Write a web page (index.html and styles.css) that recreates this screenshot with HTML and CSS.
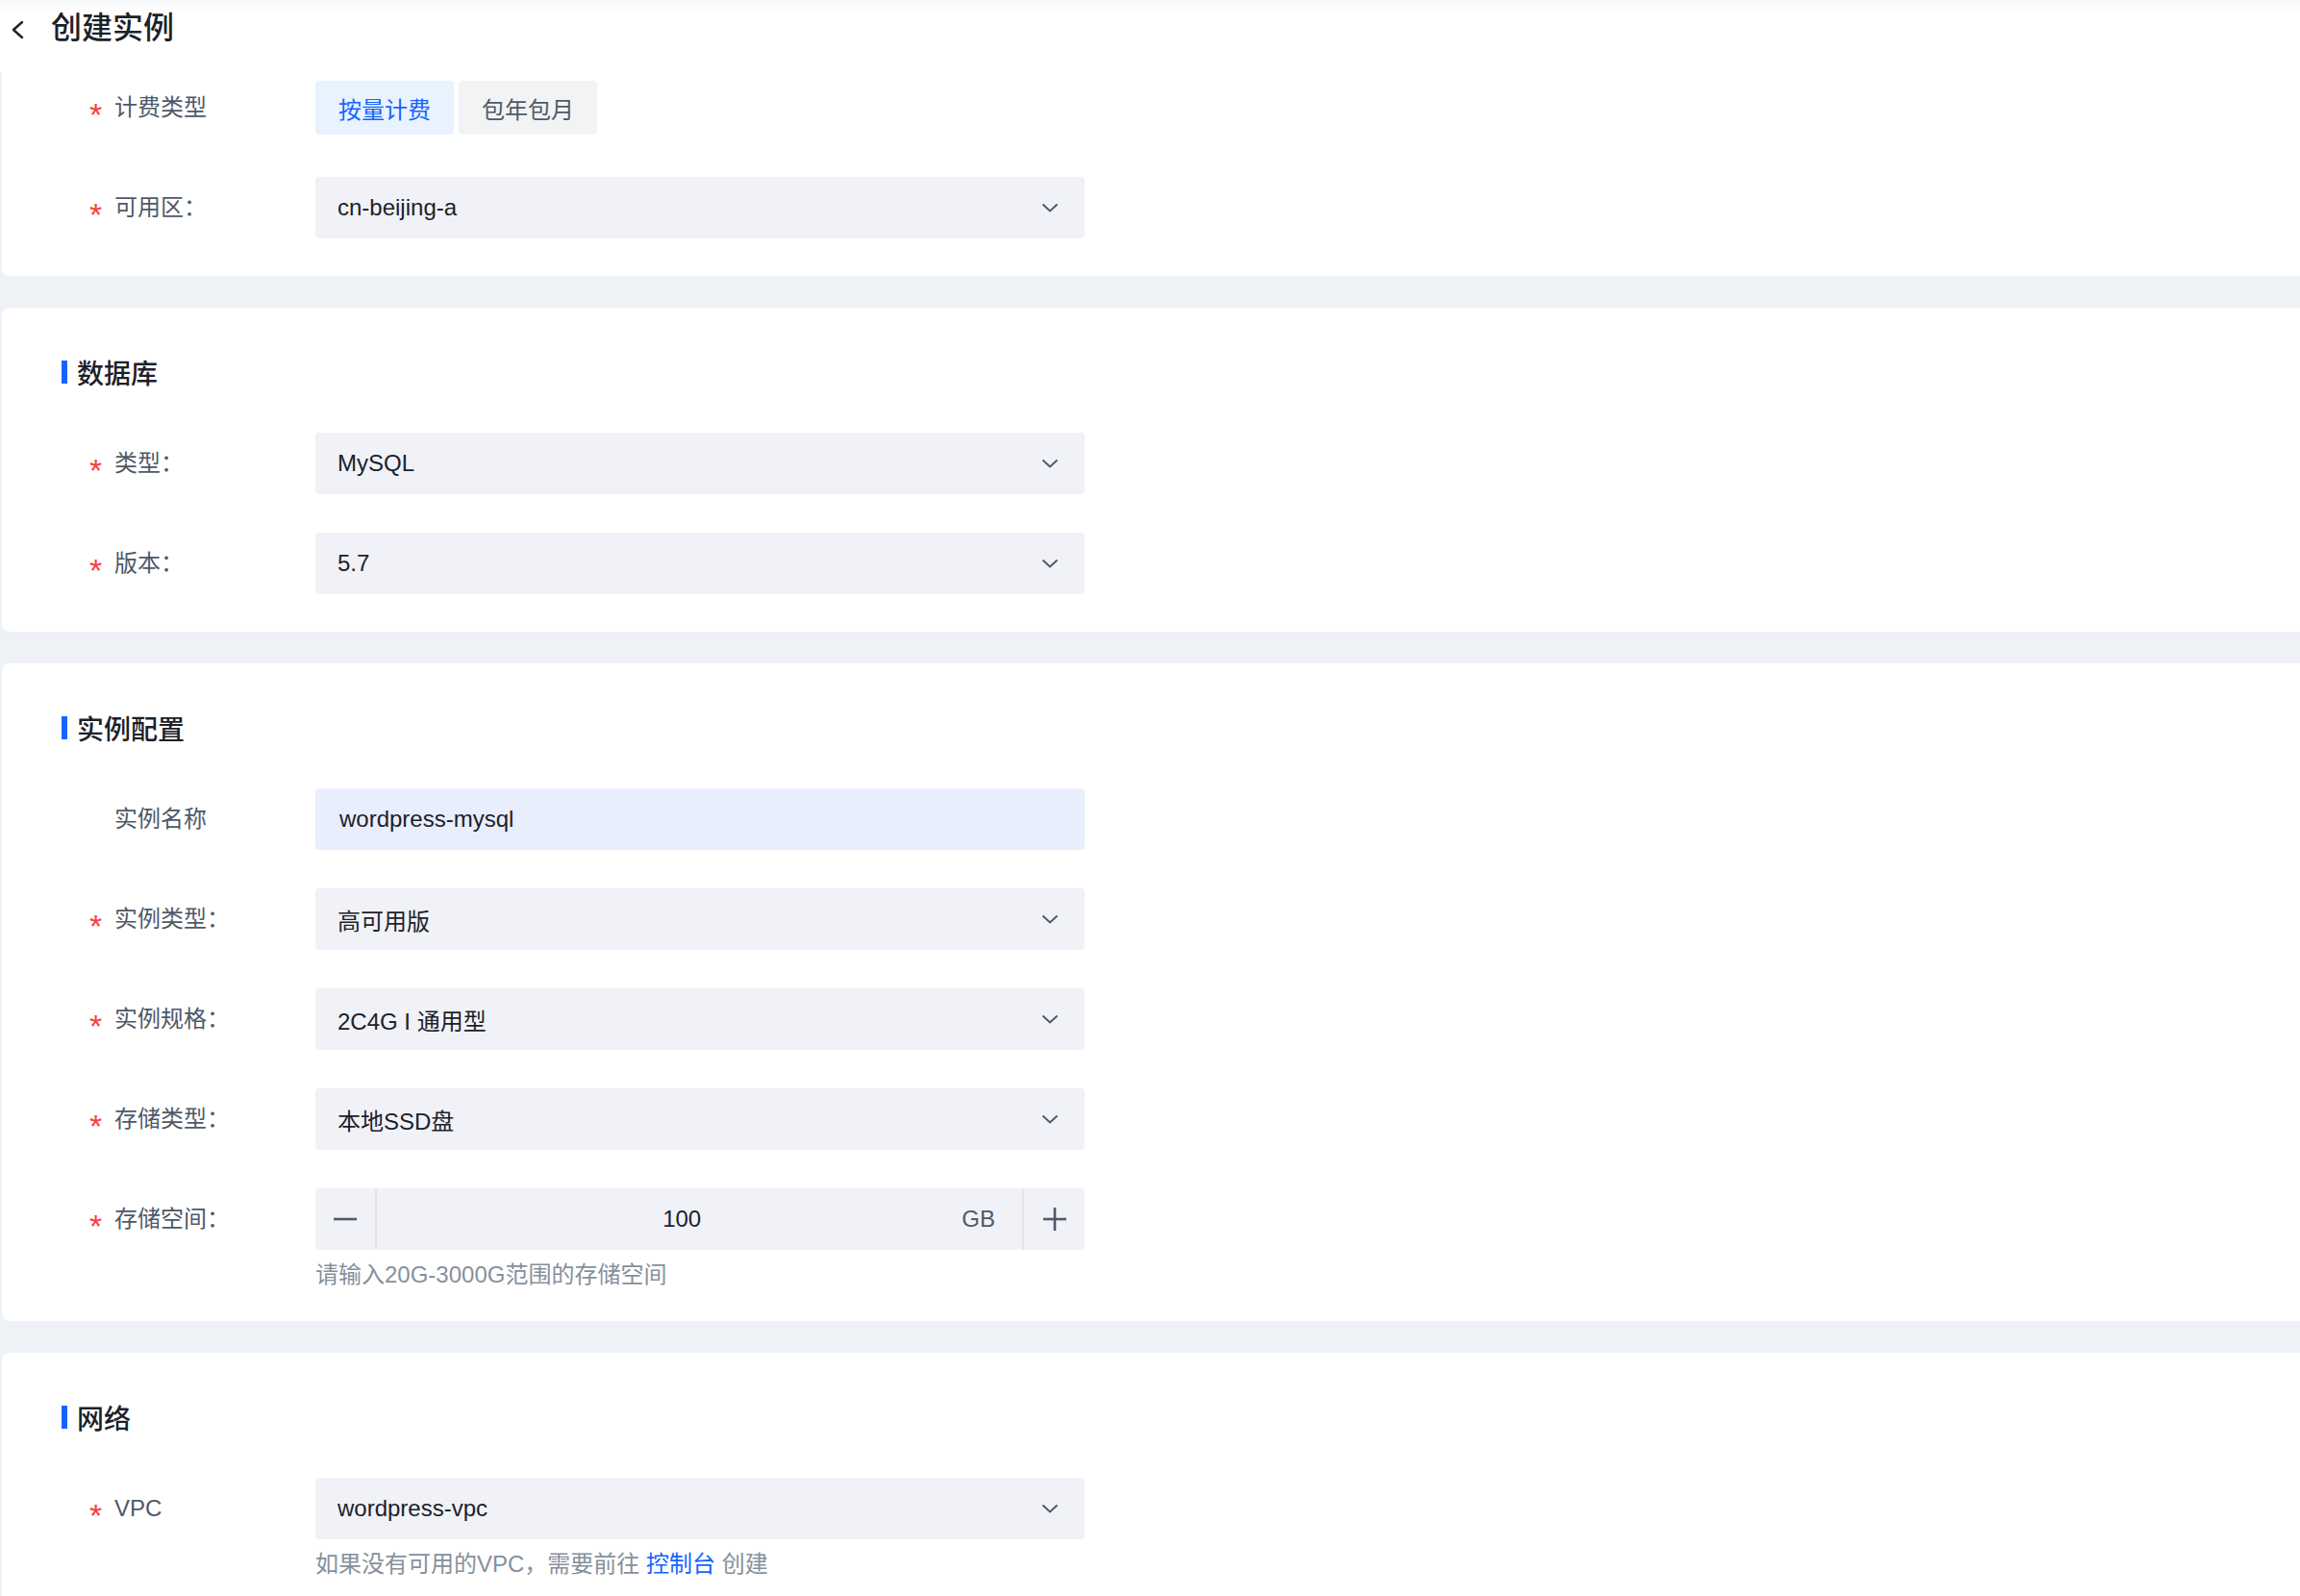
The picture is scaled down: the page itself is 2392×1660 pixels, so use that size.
FILE: index.html
```html
<!DOCTYPE html>
<html lang="zh-CN">
<head>
<meta charset="utf-8">
<title>创建实例</title>
<link rel="stylesheet" href="styles.css">
</head>
<body>
<header class="topbar">
  <div class="topbar-row">
    <svg class="back-icon" width="14" height="20" viewBox="0 0 14 20" aria-hidden="true"><polyline points="12,2 3,10 12,18" fill="none" stroke="#1d2129" stroke-width="2.4" stroke-linecap="round" stroke-linejoin="round"/></svg>
    <h1 class="page-title">创建实例</h1>
  </div>
</header>
<main class="content">
  <section class="card card-first">
    <div class="form-item">
      <div class="form-label"><span class="req">*</span>计费类型</div>
      <div class="segmented">
        <span class="seg seg-active">按量计费</span>
        <span class="seg">包年包月</span>
      </div>
    </div>
    <div class="form-item">
      <div class="form-label"><span class="req">*</span>可用区：</div>
      <div class="select"><span class="select-value">cn-beijing-a</span><svg class="arrow" width="18" height="10" viewBox="0 0 18 10"><polyline points="1.5,1.5 9,8.5 16.5,1.5" fill="none" stroke="#4e5969" stroke-width="2"/></svg></div>
    </div>
  </section>

  <section class="card">
    <h2 class="section-title">数据库</h2>
    <div class="form-item">
      <div class="form-label"><span class="req">*</span>类型：</div>
      <div class="select"><span class="select-value">MySQL</span><svg class="arrow" width="18" height="10" viewBox="0 0 18 10"><polyline points="1.5,1.5 9,8.5 16.5,1.5" fill="none" stroke="#4e5969" stroke-width="2"/></svg></div>
    </div>
    <div class="form-item">
      <div class="form-label"><span class="req">*</span>版本：</div>
      <div class="select"><span class="select-value">5.7</span><svg class="arrow" width="18" height="10" viewBox="0 0 18 10"><polyline points="1.5,1.5 9,8.5 16.5,1.5" fill="none" stroke="#4e5969" stroke-width="2"/></svg></div>
    </div>
  </section>

  <section class="card">
    <h2 class="section-title">实例配置</h2>
    <div class="form-item">
      <div class="form-label"><span class="req req-empty"></span>实例名称</div>
      <div class="input input-filled"><span class="select-value">wordpress-mysql</span></div>
    </div>
    <div class="form-item">
      <div class="form-label"><span class="req">*</span>实例类型：</div>
      <div class="select"><span class="select-value">高可用版</span><svg class="arrow" width="18" height="10" viewBox="0 0 18 10"><polyline points="1.5,1.5 9,8.5 16.5,1.5" fill="none" stroke="#4e5969" stroke-width="2"/></svg></div>
    </div>
    <div class="form-item">
      <div class="form-label"><span class="req">*</span>实例规格：</div>
      <div class="select"><span class="select-value">2C4G I 通用型</span><svg class="arrow" width="18" height="10" viewBox="0 0 18 10"><polyline points="1.5,1.5 9,8.5 16.5,1.5" fill="none" stroke="#4e5969" stroke-width="2"/></svg></div>
    </div>
    <div class="form-item">
      <div class="form-label"><span class="req">*</span>存储类型：</div>
      <div class="select"><span class="select-value">本地SSD盘</span><svg class="arrow" width="18" height="10" viewBox="0 0 18 10"><polyline points="1.5,1.5 9,8.5 16.5,1.5" fill="none" stroke="#4e5969" stroke-width="2"/></svg></div>
    </div>
    <div class="form-item form-item-help">
      <div class="form-label"><span class="req">*</span>存储空间：</div>
      <div class="stepper">
        <span class="step-btn step-minus"><svg width="24" height="4" viewBox="0 0 24 4"><line x1="0" y1="2" x2="24" y2="2" stroke="#4e5969" stroke-width="2.6"/></svg></span>
        <span class="step-value">100</span>
        <span class="step-suffix">GB</span>
        <span class="step-btn step-plus"><svg width="24" height="24" viewBox="0 0 24 24"><line x1="0" y1="12" x2="24" y2="12" stroke="#4e5969" stroke-width="2.6"/><line x1="12" y1="0" x2="12" y2="24" stroke="#4e5969" stroke-width="2.6"/></svg></span>
      </div>
      <div class="help">请输入20G-3000G范围的存储空间</div>
    </div>
  </section>

  <section class="card">
    <h2 class="section-title">网络</h2>
    <div class="form-item form-item-help">
      <div class="form-label"><span class="req">*</span>VPC</div>
      <div class="select"><span class="select-value">wordpress-vpc</span><svg class="arrow" width="18" height="10" viewBox="0 0 18 10"><polyline points="1.5,1.5 9,8.5 16.5,1.5" fill="none" stroke="#4e5969" stroke-width="2"/></svg></div>
      <div class="help">如果没有可用的VPC，需要前往 <span class="link">控制台</span> 创建</div>
    </div>
  </section>
</main>
</body>
</html>
```

FILE: styles.css
```css
* { box-sizing: border-box; }

html, body {
  margin: 0;
  padding: 0;
}

body {
  width: 2392px;
  height: 1660px;
  overflow: hidden;
  background: #eef1f6;
  font-family: "Liberation Sans", "Noto Sans CJK SC", sans-serif;
  color: #1d2129;
}

.topbar {
  height: 75px;
  background: linear-gradient(#f7f8f9 0, #fbfbfc 5px, #ffffff 14px);
}

.topbar-row {
  height: 58px;
  display: flex;
  align-items: center;
  padding-left: 11px;
}

.back-icon {
  display: block;
  margin-top: 3px;
}

.page-title {
  margin: 0 0 0 28px;
  font-size: 32px;
  font-weight: 500;
  line-height: 40px;
  color: #1d2129;
}

.content {
  display: flex;
  flex-direction: column;
  gap: 33px;
  padding-left: 2px;
  margin-right: -20px;
}

.card {
  background: #ffffff;
  border-radius: 8px;
  padding: 50px 0 39px 60px;
  display: flex;
  flex-direction: column;
  gap: 40px;
}

.card-first {
  padding-top: 5px;
  border-top-left-radius: 0;
  border-top-right-radius: 0;
}

.section-title {
  margin: -3px 0 3px;
  height: 40px;
  display: flex;
  align-items: center;
  font-size: 28px;
  font-weight: 500;
  color: #1d2129;
}

.section-title::before {
  content: "";
  width: 6px;
  height: 24px;
  background: #1664ff;
  margin: 0 10px 0 2px;
}

.form-item {
  display: grid;
  grid-template-columns: 266px 800px;
  grid-template-rows: 64px;
  align-items: center;
}

.form-item-help {
  grid-template-rows: 64px auto;
}

.form-label {
  display: flex;
  align-items: center;
  padding-left: 31px;
  font-size: 24px;
  color: #4e5969;
  line-height: 32px;
}

.req {
  width: 26px;
  flex: none;
  color: #f53f3f;
  font-size: 34px;
  line-height: 32px;
  transform: translateY(7px);
}

.segmented {
  display: flex;
  gap: 5px;
}

.seg {
  height: 56px;
  padding: 0 24px;
  display: flex;
  align-items: center;
  border-radius: 4px;
  background: #f2f3f5;
  color: #4e5969;
  font-size: 24px;
}

.seg-active {
  background: #e8f3ff;
  color: #1664ff;
}

.select,
.input {
  height: 64px;
  border-radius: 4px;
  background: #f0f2f7;
  display: flex;
  align-items: center;
  justify-content: space-between;
  padding: 0 27px 0 23px;
  font-size: 24px;
  color: #1d2129;
}

.input-filled {
  background: #e8eefb;
  padding-left: 25px;
}

.arrow {
  display: block;
  flex: none;
}

.stepper {
  height: 64px;
  border-radius: 4px;
  background: #f0f2f7;
  display: flex;
  align-items: stretch;
  font-size: 24px;
}

.step-btn {
  display: flex;
  align-items: center;
  justify-content: center;
  flex: none;
}

.step-minus {
  width: 64px;
  border-right: 2px solid #e3e5ea;
}

.step-plus {
  width: 65px;
  border-left: 2px solid #e3e5ea;
}

.step-value {
  flex: 1;
  display: flex;
  align-items: center;
  justify-content: center;
  padding-left: 26px;
  color: #1d2129;
}

.step-suffix {
  display: flex;
  align-items: center;
  padding-right: 28px;
  color: #4e5969;
}

.help {
  grid-column: 2;
  margin-top: 10px;
  margin-bottom: -7px;
  font-size: 24px;
  line-height: 32px;
  color: #86909c;
}

.link {
  color: #1664ff;
}
```
